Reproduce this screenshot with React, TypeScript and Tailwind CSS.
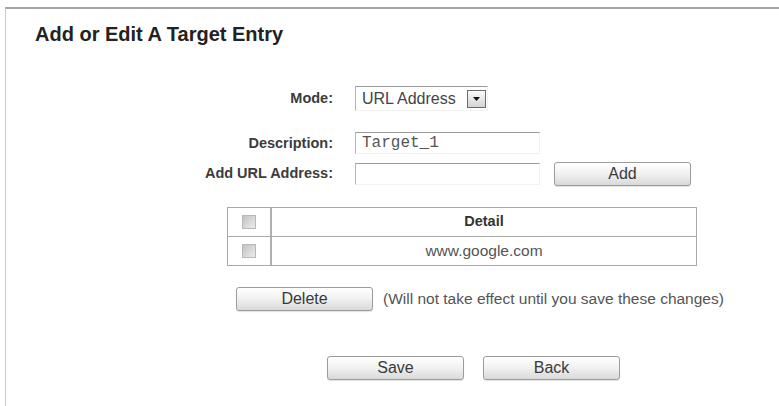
import React from "react";

const btn =
  "flex items-center justify-center w-[137px] h-[24px] rounded-[3px] border border-[#9c9c9c] bg-linear-to-b from-[#ffffff] via-[#f1f1f1] to-[#d9d9d9] text-[16px] text-[#3a3a3a] shadow-[0_1px_1px_rgba(0,0,0,0.12)]";

const label = "text-right text-[14.5px] font-bold text-[#3c3c3c] leading-none";

const inset =
  "border-t border-l border-r border-b border-t-[#9a9a9a] border-l-[#b4b4b4] border-r-[#f2f2f2] border-b-[#f2f2f2] bg-white";

function Checkbox() {
  return (
    <span className="block w-[14px] h-[14px] border border-[#b8b8b8] bg-linear-to-br from-[#c2c2c2] to-[#ececec]" />
  );
}

function ModeSelect() {
  return (
    <div className={`${inset} flex items-center w-[133px] h-[25px] pl-[6px] pr-[1px]`}>
      <span className="flex-1 text-[16px] text-[#444] leading-none">URL Address</span>
      <span className="flex items-center justify-center w-[19px] h-[18px] border border-[#6b6b6b] bg-linear-to-b from-[#fafafa] to-[#d4d4d4]">
        <svg width="7" height="4" viewBox="0 0 7 4">
          <path d="M0 0h7L3.5 4z" fill="#111" />
        </svg>
      </span>
    </div>
  );
}

export default function App() {
  return (
    <div className="w-[779px] h-[406px] overflow-hidden bg-white font-['Liberation_Sans',Arial,sans-serif]">
      <div className="ml-[5px] mt-[7px] h-[399px] border-t-2 border-l border-t-[#a3a3a3] border-l-[#cacaca]">
        <h1 className="pl-[29px] pt-[15px] text-[20px] leading-[20px] font-bold text-[#222]">
          Add or Edit A Target Entry
        </h1>

        {/* form rows: labels right-aligned against the field column */}
        <div className="mt-[42px] grid grid-cols-[327px_auto] gap-x-[22px]">
          <div className="h-[25px] flex items-center justify-end">
            <span className={label}>Mode:</span>
          </div>
          <ModeSelect />

          <div className="mt-[21px] h-[22px] flex items-center justify-end">
            <span className={label}>Description:</span>
          </div>
          <div className="mt-[21px] flex">
            <div className={`${inset} w-[185px] h-[22px] flex items-center pl-[6px]`}>
              <span className="font-['Liberation_Mono','Courier_New',monospace] text-[16px] text-[#555] leading-none">
                Target_1
              </span>
            </div>
          </div>

          <div className="mt-[8px] h-[23px] flex items-center justify-end">
            <span className={label}>Add URL Address:</span>
          </div>
          <div className="mt-[8px] h-[23px] flex items-end">
            <div className={`${inset} w-[185px] h-[22px]`} />
            <button className={`${btn} ml-[14px] self-start`}>Add</button>
          </div>
        </div>

        <div className="mt-[22px] ml-[221px] w-[470px] border border-[#a9a9a9]">
          <div className="grid grid-cols-[44px_1fr] h-[29px] border-b border-[#a9a9a9]">
            <div className="flex items-center justify-center border-r-2 border-[#b0b0b0]">
              <Checkbox />
            </div>
            <div className="flex items-center justify-center text-[14.5px] font-bold text-[#333]">
              Detail
            </div>
          </div>
          <div className="grid grid-cols-[44px_1fr] h-[28px]">
            <div className="flex items-center justify-center border-r-2 border-[#b0b0b0]">
              <Checkbox />
            </div>
            <div className="flex items-center justify-center text-[15.5px] text-[#555]">
              www.google.com
            </div>
          </div>
        </div>

        <div className="mt-[21px] ml-[230px] flex items-center">
          <button className={btn}>Delete</button>
          <span className="ml-[10px] text-[15.5px] text-[#555]">
            (Will not take effect until you save these changes)
          </span>
        </div>

        <div className="mt-[45px] ml-[321px] flex gap-[19px]">
          <button className={btn}>Save</button>
          <button className={btn}>Back</button>
        </div>
      </div>
    </div>
  );
}
